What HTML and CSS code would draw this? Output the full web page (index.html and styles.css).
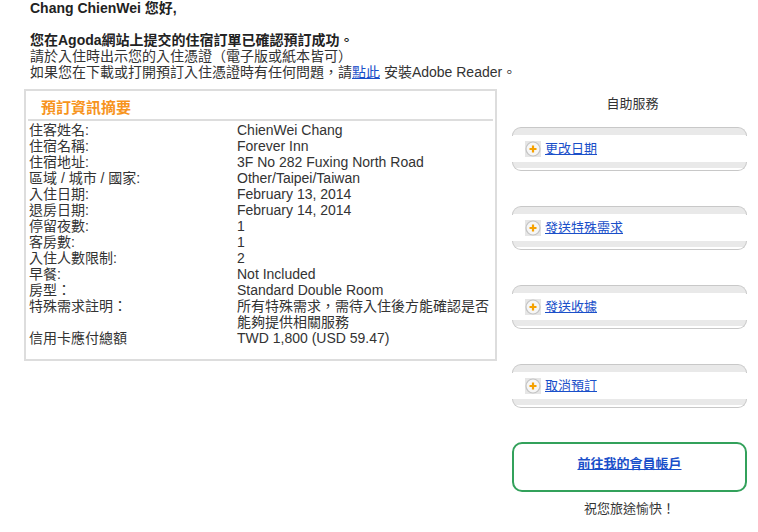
FILE: index.html
```html
<!DOCTYPE html>
<html lang="zh-Hant">
<head>
  <meta charset="UTF-8">
  <meta name="viewport" content="width=device-width, initial-scale=1.0">
  <title>預訂確認</title>
  <link rel="stylesheet" href="styles.css">
</head>
<body>
  <div class="mail">
    <p class="greet">Chang ChienWei 您好,</p>
    <p class="intro">
      <b>您在Agoda網站上提交的住宿訂單已確認預訂成功。</b><br>
      請於入住時出示您的入住憑證（電子版或紙本皆可）<br>
      如果您在下載或打開預訂入住憑證時有任何問題，請<a href="#">點此</a> 安裝Adobe Reader。
    </p>

    <div class="content">
      <div class="summary">
        <h3>預訂資訊摘要</h3>
        <table>
          <tr><td class="label">住客姓名:</td><td>ChienWei Chang</td></tr>
          <tr><td class="label">住宿名稱:</td><td>Forever Inn</td></tr>
          <tr><td class="label">住宿地址:</td><td>3F No 282 Fuxing North Road</td></tr>
          <tr><td class="label">區域 / 城市 / 國家:</td><td>Other/Taipei/Taiwan</td></tr>
          <tr><td class="label">入住日期:</td><td>February 13, 2014</td></tr>
          <tr><td class="label">退房日期:</td><td>February 14, 2014</td></tr>
          <tr><td class="label">停留夜數:</td><td>1</td></tr>
          <tr><td class="label">客房數:</td><td>1</td></tr>
          <tr><td class="label">入住人數限制:</td><td>2</td></tr>
          <tr><td class="label">早餐:</td><td>Not Included</td></tr>
          <tr><td class="label">房型：</td><td>Standard Double Room</td></tr>
          <tr><td class="label">特殊需求註明：</td><td>所有特殊需求，需待入住後方能確認是否能夠提供相關服務</td></tr>
          <tr><td class="label">信用卡應付總額</td><td>TWD 1,800 (USD 59.47)</td></tr>
        </table>
      </div>

      <div class="side">
        <div class="side-title">自助服務</div>
        <div class="svc">
          <a href="#"><svg class="plus" width="16" height="16" viewBox="0 0 16 16"><rect width="16" height="16" fill="#e6e6e6"/><circle cx="8" cy="8" r="7" fill="#f6f6f6" stroke="#c4c4c4" stroke-width="1.2"/><path d="M8 4.5v7M4.5 8h7" stroke="#f5a100" stroke-width="2.2"/></svg>更改日期</a>
        </div>
        <div class="svc">
          <a href="#"><svg class="plus" width="16" height="16" viewBox="0 0 16 16"><rect width="16" height="16" fill="#e6e6e6"/><circle cx="8" cy="8" r="7" fill="#f6f6f6" stroke="#c4c4c4" stroke-width="1.2"/><path d="M8 4.5v7M4.5 8h7" stroke="#f5a100" stroke-width="2.2"/></svg>發送特殊需求</a>
        </div>
        <div class="svc">
          <a href="#"><svg class="plus" width="16" height="16" viewBox="0 0 16 16"><rect width="16" height="16" fill="#e6e6e6"/><circle cx="8" cy="8" r="7" fill="#f6f6f6" stroke="#c4c4c4" stroke-width="1.2"/><path d="M8 4.5v7M4.5 8h7" stroke="#f5a100" stroke-width="2.2"/></svg>發送收據</a>
        </div>
        <div class="svc">
          <a href="#"><svg class="plus" width="16" height="16" viewBox="0 0 16 16"><rect width="16" height="16" fill="#e6e6e6"/><circle cx="8" cy="8" r="7" fill="#f6f6f6" stroke="#c4c4c4" stroke-width="1.2"/><path d="M8 4.5v7M4.5 8h7" stroke="#f5a100" stroke-width="2.2"/></svg>取消預訂</a>
        </div>
        <div class="account">
          <a href="#">前往我的會員帳戶</a>
        </div>
        <div class="bye">祝您旅途愉快！</div>
      </div>
    </div>
  </div>
</body>
</html>
```

FILE: styles.css
```css
body {
    margin: 0;
    font-family: "Liberation Sans", Arial, "Noto Sans CJK TC", sans-serif;
    font-size: 14px;
    line-height: 16px;
    color: #333;
    background: #fff;
}
a {
    color: #1a4fc9;
}
p {
    margin: 0;
}
.greet {
    padding-left: 30px;
    font-weight: bold;
    color: #222;
    margin-bottom: 16px;
}
.intro {
    padding-left: 30px;
}
.intro b {
    color: #222;
}
.content {
    display: flex;
    align-items: flex-start;
    margin: 9px 0 0 24px;
}
.summary {
    width: 469px;
    border: 2px solid #ddd;
}
.summary h3 {
    margin: 0 2px;
    padding: 8px 0 2px 13px;
    font-size: 15px;
    line-height: 18px;
    color: #f7941d;
    border-bottom: 2px solid #ddd;
}
table {
    border-collapse: collapse;
    margin: 1px 0 13px 3px;
}
td {
    padding: 0;
    vertical-align: top;
}
td.label {
    width: 208px;
}
td + td {
    width: 255px;
}
.side {
    width: 235px;
    margin-left: 15px;
    text-align: center;
}
.side-title {
    padding: 7px 0 0 6px;
    line-height: 16px;
    font-size: 13px;
    height: 31px;
}

/* service box: rounded top and bottom caps with a grey band */
.svc {
    display: flex;
    flex-direction: column;
    margin-bottom: 35px;
    text-align: left;
}
.svc::before,
.svc::after {
    content: "";
    display: block;
    height: 8px;
    border: 1px solid #c8c8c8;
}
.svc::before {
    border-bottom: 0;
    border-radius: 9px 9px 0 0;
    background: linear-gradient(#e9e9e9 0, #e9e9e9 7px, #fff 7px);
}
.svc::after {
    border-top: 0;
    border-radius: 0 0 9px 9px;
    background: linear-gradient(#e9e9e9 0, #e9e9e9 6px, #fff 6px);
}
.svc a {
    display: flex;
    align-items: center;
    height: 26px;
    padding-left: 13px;
    font-size: 13px;
}
.plus {
    margin-right: 4px;
}
.account {
    margin-top: -1px;
    border: 2px solid #33a15b;
    border-radius: 10px;
    padding-top: 11px;
    box-sizing: border-box;
    height: 50px;
}
.account a {
    font-weight: bold;
    font-size: 13px;
}
.bye {
    margin-top: 9px;
    font-size: 13px;
}
```
